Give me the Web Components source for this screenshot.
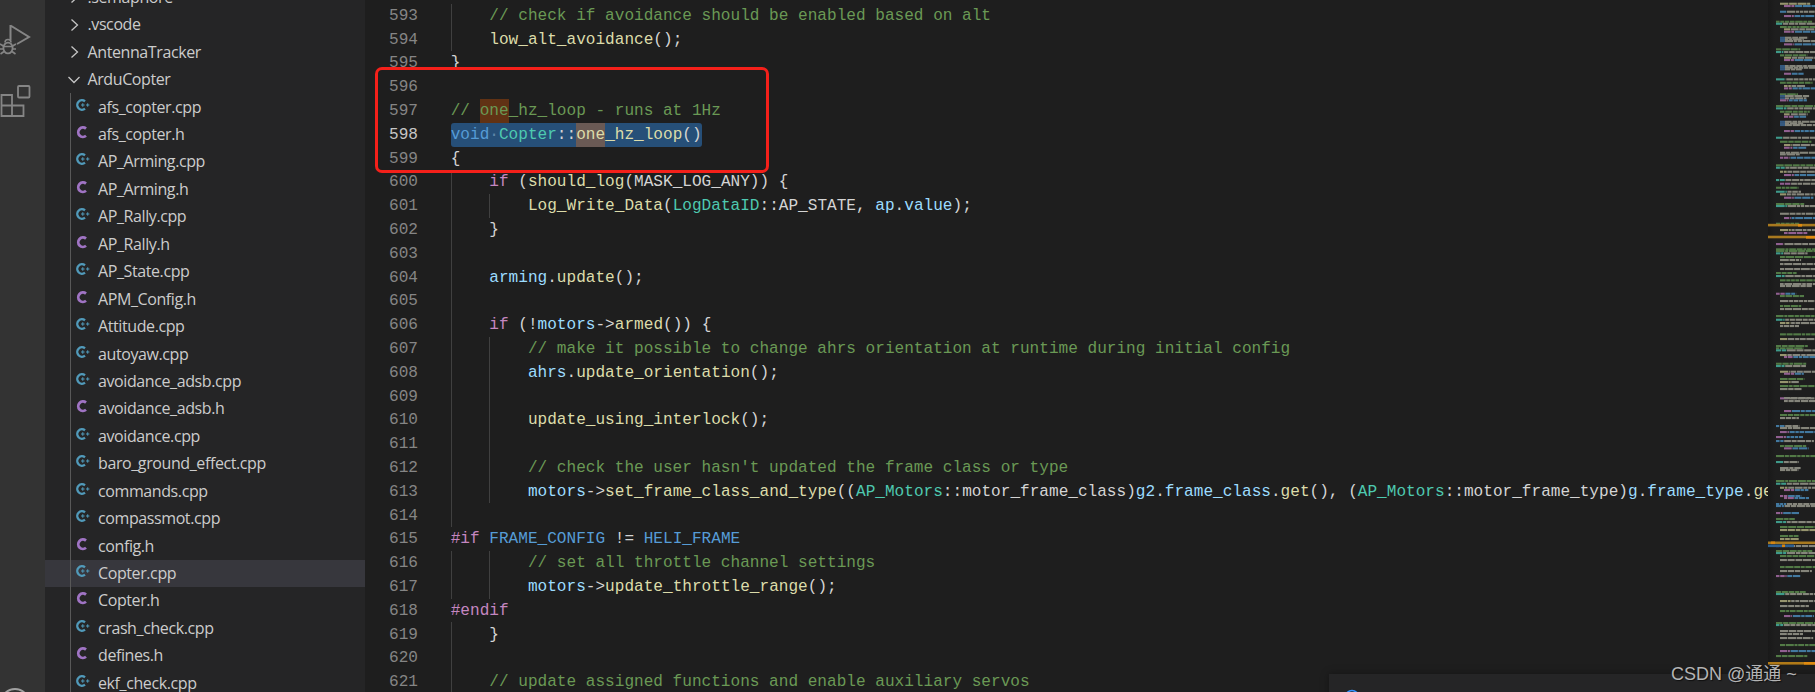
<!DOCTYPE html>
<html>
<head>
<meta charset="utf-8">
<title>ArduCopter</title>
<style>
  html, body { margin: 0; height: 692px; overflow: hidden; background: #1e1e1e; }
</style>
</head>
<body>
<vs-app>
  <vs-activity slot="activity"></vs-activity>
  <vs-explorer slot="side">
    <vs-tree-row kind="closed">.semaphore</vs-tree-row>
    <vs-tree-row kind="closed">.vscode</vs-tree-row>
    <vs-tree-row kind="closed">AntennaTracker</vs-tree-row>
    <vs-tree-row kind="open">ArduCopter</vs-tree-row>
    <vs-tree-row kind="cpp">afs_copter.cpp</vs-tree-row>
    <vs-tree-row kind="h">afs_copter.h</vs-tree-row>
    <vs-tree-row kind="cpp">AP_Arming.cpp</vs-tree-row>
    <vs-tree-row kind="h">AP_Arming.h</vs-tree-row>
    <vs-tree-row kind="cpp">AP_Rally.cpp</vs-tree-row>
    <vs-tree-row kind="h">AP_Rally.h</vs-tree-row>
    <vs-tree-row kind="cpp">AP_State.cpp</vs-tree-row>
    <vs-tree-row kind="h">APM_Config.h</vs-tree-row>
    <vs-tree-row kind="cpp">Attitude.cpp</vs-tree-row>
    <vs-tree-row kind="cpp">autoyaw.cpp</vs-tree-row>
    <vs-tree-row kind="cpp">avoidance_adsb.cpp</vs-tree-row>
    <vs-tree-row kind="h">avoidance_adsb.h</vs-tree-row>
    <vs-tree-row kind="cpp">avoidance.cpp</vs-tree-row>
    <vs-tree-row kind="cpp">baro_ground_effect.cpp</vs-tree-row>
    <vs-tree-row kind="cpp">commands.cpp</vs-tree-row>
    <vs-tree-row kind="cpp">compassmot.cpp</vs-tree-row>
    <vs-tree-row kind="h">config.h</vs-tree-row>
    <vs-tree-row kind="cpp" selected>Copter.cpp</vs-tree-row>
    <vs-tree-row kind="h">Copter.h</vs-tree-row>
    <vs-tree-row kind="cpp">crash_check.cpp</vs-tree-row>
    <vs-tree-row kind="h">defines.h</vs-tree-row>
    <vs-tree-row kind="cpp">ekf_check.cpp</vs-tree-row>
  </vs-explorer>
  <vs-editor slot="editor"></vs-editor>
  <vs-minimap slot="minimap"></vs-minimap>
  <vs-toast slot="overlay"></vs-toast>
  <vs-callout slot="overlay"></vs-callout>
  <vs-watermark slot="overlay">CSDN @通通 ~</vs-watermark>
</vs-app>

<script>
class VsApp extends HTMLElement {
  constructor() {
    super();
    this.attachShadow({ mode: "open" });
    this.shadowRoot.innerHTML = `
      <style>
        :host { display: flex; position: relative; width: 1815px; height: 692px; overflow: hidden; }
      </style>
      <slot name="activity"></slot>
      <slot name="side"></slot>
      <slot name="editor"></slot>
      <slot name="minimap"></slot>
      <slot name="overlay"></slot>
    `;
  }
}

class VsActivity extends HTMLElement {
  constructor() {
    super();
    this.attachShadow({ mode: "open" });
    this.shadowRoot.innerHTML = `
      <style>
        :host { display: flex; flex-direction: column; justify-content: space-between; width: 45px; height: 692px; background: #333333; overflow: hidden; }
        svg { display: block; fill: none; stroke: #858585; }
        .top { padding-top: 22px; }
        .ext { margin-top: 29px; }
        .acct { margin-bottom: -28px; }
      </style>
      <div class="top">
        <svg width="45" height="34" viewBox="0 0 45 34">
          <path d="M10.5 3v15.5M10.5 3.5L29 15L17 22" stroke-width="2"/>
          <ellipse cx="8" cy="26" rx="4.6" ry="5.4" stroke-width="1.8"/>
          <path d="M3.5 24.5h9M0 22l3.5 2M16 22l-3.5 2M0 27h3.5M16 27h-3.5M0.5 32l3.5-2.5M15.5 32l-3.5-2.5" stroke-width="1.6"/>
          <path d="M5 20.5a3 3 0 0 1 6 0" stroke-width="1.6"/>
        </svg>
        <svg class="ext" width="45" height="32" viewBox="0 0 45 32">
          <rect x="18" y="1" width="11.5" height="11.5" rx="1" stroke-width="1.8"/>
          <path d="M1.5 10h10.5v10.5h11.5v10.5H1.5zM1.5 20.5h10.5V31" stroke-width="1.8"/>
        </svg>
      </div>
      <svg class="acct" width="45" height="32" viewBox="0 0 45 32">
        <circle cx="15" cy="15" r="14" stroke="#a0a0a0" stroke-width="2"/>
      </svg>
    `;
  }
}

class VsExplorer extends HTMLElement {
  constructor() {
    super();
    this.attachShadow({ mode: "open" });
    this.shadowRoot.innerHTML = `
      <style>
        :host { display: block; width: 320px; height: 692px; flex: none; overflow: hidden; background: #252526; }
        .list { margin-top: -16.4px; }
      </style>
      <div class="list"><slot></slot></div>
    `;
  }
}

const TREE_ICONS = {
  closed: `<svg width="16" height="16" viewBox="0 0 16 16"><path d="M5.5 2.5L11.5 8L5.5 13.5" fill="none" stroke="#c5c5c5" stroke-width="1.3"/></svg>`,
  open: `<svg width="16" height="16" viewBox="0 0 16 16"><path d="M2.5 5L8 10.5L13.5 5" fill="none" stroke="#c5c5c5" stroke-width="1.3"/></svg>`,
  cpp: `<svg width="16" height="16" viewBox="0 0 16 16"><path d="M9 3.4A4.7 4.7 0 1 0 9 10.6" fill="none" stroke="#519aba" stroke-width="2.4"/><path d="M5 7h3.6M6.8 5.2v3.6M10 7h3.4M11.7 5.3v3.4" fill="none" stroke="#519aba" stroke-width="1"/></svg>`,
  h: `<svg width="16" height="16" viewBox="0 0 16 16"><path d="M10 3.6A4.7 4.7 0 1 0 10 10.8" fill="none" stroke="#a074c4" stroke-width="2.8"/></svg>`
};

class VsTreeRow extends HTMLElement {
  constructor() {
    super();
    this.attachShadow({ mode: "open" });
    const kind = this.getAttribute("kind");
    this.shadowRoot.innerHTML = `
      <style>
        :host { display: flex; align-items: center; height: 27.45px; color: #cccccc; font: 16px/27px "Open Sans", "Noto Sans", sans-serif; letter-spacing: -0.4px; white-space: nowrap; }
        :host([kind="closed"]), :host([kind="open"]) { padding-left: 21px; gap: 5.5px; }
        :host([kind="cpp"]), :host([kind="h"]) { padding-left: 31px; gap: 6px; background: linear-gradient(#585858, #585858) 25px 0 / 1px 100% no-repeat; }
        :host([selected]) { background-color: #37373d; }
        svg { display: block; flex: none; }
        :host([kind="cpp"]) svg, :host([kind="h"]) svg { margin-bottom: 3px; }
      </style>
      ${TREE_ICONS[kind]}<span><slot></slot></span>
    `;
  }
}

// t = token classes: k keyword, m macro/pp, f function, v variable, c class, o comment, p plain
const CODE = [
  [593, 1, [["p", "    "], ["o", "// check if avoidance should be enabled based on alt"]]],
  [594, 1, [["p", "    "], ["f", "low_alt_avoidance"], ["p", "();"]]],
  [595, 0, [["p", "}"]]],
  [596, 0, []],
  [597, 0, [["o", "// "], ["o hit", "one"], ["o", "_hz_loop - runs at 1Hz"]]],
  [598, 0, [["sel", [["k", "void"], ["ws", "·"], ["c", "Copter"], ["p", "::"], ["f hit", "one"], ["f", "_hz_loop"], ["p", "()"]]]]],
  [599, 0, [["p", "{"]]],
  [600, 1, [["p", "    "], ["m", "if"], ["p", " ("], ["f", "should_log"], ["p", "(MASK_LOG_ANY)) {"]]],
  [601, 2, [["p", "        "], ["f", "Log_Write_Data"], ["p", "("], ["c", "LogDataID"], ["p", "::AP_STATE, "], ["v", "ap"], ["p", "."], ["v", "value"], ["p", ");"]]],
  [602, 1, [["p", "    }"]]],
  [603, 1, []],
  [604, 1, [["p", "    "], ["v", "arming"], ["p", "."], ["f", "update"], ["p", "();"]]],
  [605, 1, []],
  [606, 1, [["p", "    "], ["m", "if"], ["p", " (!"], ["v", "motors"], ["p", "->"], ["f", "armed"], ["p", "()) {"]]],
  [607, 2, [["p", "        "], ["o", "// make it possible to change ahrs orientation at runtime during initial config"]]],
  [608, 2, [["p", "        "], ["v", "ahrs"], ["p", "."], ["f", "update_orientation"], ["p", "();"]]],
  [609, 2, []],
  [610, 2, [["p", "        "], ["f", "update_using_interlock"], ["p", "();"]]],
  [611, 2, []],
  [612, 2, [["p", "        "], ["o", "// check the user hasn't updated the frame class or type"]]],
  [613, 2, [["p", "        "], ["v", "motors"], ["p", "->"], ["f", "set_frame_class_and_type"], ["p", "(("], ["c", "AP_Motors"], ["p", "::motor_frame_class)"], ["v", "g2"], ["p", "."], ["v", "frame_class"], ["p", "."], ["f", "get"], ["p", "(), ("], ["c", "AP_Motors"], ["p", "::motor_frame_type)"], ["v", "g"], ["p", "."], ["v", "frame_type"], ["p", "."], ["f", "get"], ["p", "());"]]],
  [614, 1, []],
  [615, 0, [["m", "#if"], ["p", " "], ["k", "FRAME_CONFIG"], ["p", " != "], ["k", "HELI_FRAME"]]],
  [616, 2, [["p", "        "], ["o", "// set all throttle channel settings"]]],
  [617, 2, [["p", "        "], ["v", "motors"], ["p", "->"], ["f", "update_throttle_range"], ["p", "();"]]],
  [618, 0, [["m", "#endif"]]],
  [619, 1, [["p", "    }"]]],
  [620, 1, []],
  [621, 1, [["p", "    "], ["o", "// update assigned functions and enable auxiliary servos"]]]
];

function renderTokens(tokens) {
  return tokens.map(([cls, text]) =>
    Array.isArray(text)
      ? `<span class="${cls}">${renderTokens(text)}</span>`
      : `<span class="${cls}">${text}</span>`
  ).join("");
}

class VsEditor extends HTMLElement {
  constructor() {
    super();
    this.attachShadow({ mode: "open" });
    const rows = CODE.map(([n, guides, tokens]) => `
      <div class="row g${guides}${n === 597 || n === 598 ? " hl" : ""}">
        <span class="num${n === 598 ? " cur" : ""}">${n}</span><span class="text">${renderTokens(tokens)}</span>
      </div>`).join("");
    this.shadowRoot.innerHTML = `
      <style>
        :host { display: block; flex: 1; min-width: 0; height: 692px; overflow: hidden; background: #1e1e1e; padding-top: 3.7px; box-sizing: border-box; font: 16.08px/23.8px "Liberation Mono", monospace; color: #d4d4d4; }
        .row { display: flex; height: 23.8px; white-space: pre; }
        .g1 { background: linear-gradient(#404040, #404040) 85.5px 0 / 1px 100% no-repeat; }
        .g2 { background: linear-gradient(#404040, #404040) 85.5px 0 / 1px 100% no-repeat, linear-gradient(#404040, #404040) 124px 0 / 1px 100% no-repeat; }
        .num { flex: none; width: 53px; text-align: right; color: #858585; margin-right: 32.7px; padding-top: 1.2px; }
        .cur { color: #c6c6c6; }
        .text { flex: none; padding-top: 1.2px; }
        .hl .text { padding-top: 0; }
        .o { color: #6a9955; }
        .k { color: #569cd6; }
        .m { color: #c586c0; }
        .f { color: #dcdcaa; }
        .v { color: #9cdcfe; }
        .c { color: #4ec9b0; }
        .ws { color: #5f86a8; }
        .hit { background: #613214; display: inline-block; height: 24px; box-sizing: border-box; padding-top: 1.2px; }
        .f.hit { background: #6a5a55; }
        .sel { background: #264f78; display: inline-block; height: 24px; border-radius: 3px; overflow: hidden; }
      </style>
      ${rows}
    `;
  }
}

// minimap rows read off the reference: y (px), indent column, colour run
const MINIMAP = `
2.7 1 y;5 2 pb;10.7 1 bw;15 2 pb;20.7 0 g;22.7 0 tw;26 1 g;28.3 2 yw;30.7 2 pb;36.7 1 Bw;38.3 1 Bw;40 1 Bw;43.3 2 pb;48.3 0 g;51 0 tw;54.3 1 g;56.7 2 yw;59 2 pb;65 1 Bw;66.7 1 Bw;68.3 1 Bw;72.7 2 pb;78.3 0 tw;81.7 1 g;85 2 yw;87.3 2 pb;93.3 1 g;95 1 Bw;97.3 1 Bw;99.3 1 pb;105 0 g;107.3 0 tw;110.7 1 g;113.3 2 yw;115.7 2 pb;120.7 1 Bw;122.3 1 Bw;124 1 Bw;130 2 pb;136.7 0 tw;140.7 1 g;144 2 yw;146.7 2 pb;151.7 1 w;153.3 1 w;156.7 1 pb;164.3 0 g;166.7 0 tw;170.7 1 yw;174 2 pb;179 0 tw;182.7 1 pw;186.7 0 g;190.7 0 tw;193.3 1 yw;196.7 2 pb;203 0 g;205 0 tw;212.7 1 w;217 2 pb;222.7 0 g;229 1 yw;232 2 p;243 0 pw;248.3 0 g;250 0 g;252.3 0 tw;256 1 g;259 1 w;263 1 w;268 1 w;272 0 g;275 0 tw;279.3 1 g;283 1 w;285 1 w;292.7 0 pb;295 1 g;300 1 w;305 1 g;308 1 w;315 0 g;318.7 0 tw;322 1 yw;325 1 w;333.3 1 g;338 1 yw;345 0 g;347.3 0 g;349.3 0 tw;354 1 yw;356 2 pb;362.7 0 g;365 0 tw;370.7 1 yw;372.7 2 pb;378 1 g;381 1 yw;385 1 g;388 1 w;397.3 1 pw;400 2 w;397 2 w;410 2 pb;414 1 g;417 1 w;425 0 bw;427 1 w;431 1 pb;436 0 pb;440 0 bw;445 1 g;447.3 2 pb;455 0 g;461 0 tw;467 1 w;469 1 w;480 0 g;482.7 0 tw;486.7 1 yw;489 2 pb;495 1 pb;497 2 pb;503 0 bw;505 0 bw;512 0 pb;518 0 g;521 0 tw;526 1 g;529 1 y;535 1 g;538 1 y;545 0 pw;550 0 g;552 0 tw;555 1 g;559 1 w;566 1 g;570 1 w;575 0 pb;591 0 g;593 0 tw;600 1 yw;605 1 w;610 1 g;615 2 pb;622 0 g;624 0 tw;630 1 w;633 1 w;637 1 w;644 1 g;650 1 pb;655 0 g;
`;
const MINI_BANDS = [
  [223.8, 0, 47, "#a8791f"], [224, 30, 4, "#e08a10"],
  [235.7, 0, 47, "#a8791f"], [236, 38, 9, "#e08a10"],
  [541.5, 0, 47, "#a8791f"], [541.5, 3, 4, "#d68512"],
  [544.5, 0, 26, "#2f5f8f"], [544.5, 14, 3, "#d68512"],
  [662, 0, 47, "#b07a18"], [662, 36, 11, "#e08a10"]
];
const MINI_COLORS = { g: "#527a46", t: "#3f9a8a", y: "#96946e", p: "#905f90", b: "#42789f", w: "#85857b", B: "#35597f" };

class VsMinimap extends HTMLElement {
  constructor() {
    super();
    this.attachShadow({ mode: "open" });
    let seed = 7;
    const rnd = () => (seed = (seed * 1103 + 12345) % 65536) / 65536;
    let rects = "";
    for (const entry of MINIMAP.trim().split(";")) {
      if (!entry.trim()) continue;
      const [y, col, run] = entry.trim().split(" ");
      let x = 8 + col * 4;
      const end = Math.min(47, x + 18 + rnd() * 40);
      [...run].forEach((key, i) => {
        const block = key === "B";
        const stop = i === run.length - 1 ? end : x + (block ? 5 : 6 + rnd() * 5);
        while (x < stop) {
          const w = Math.min(stop - x, block ? 5 : 3 + rnd() * 6);
          rects += `<rect x="${x.toFixed(1)}" y="${y}" width="${w.toFixed(1)}" height="2.1" fill="${MINI_COLORS[key]}"/>`;
          x += w + (block ? 0 : 0.7);
        }
      });
    }
    for (const [y, x, w, fill] of MINI_BANDS) {
      rects += `<rect x="${x}" y="${y}" width="${w}" height="2.6" fill="${fill}"/>`;
    }
    this.shadowRoot.innerHTML = `
      <style>
        :host { display: block; flex: none; width: 47px; height: 692px; overflow: hidden; background: linear-gradient(90deg, #191919, #1e1e1e 7px); }
        svg { display: block; filter: blur(0.35px); }
      </style>
      <svg width="47" height="692" viewBox="0 0 47 692">${rects}</svg>
    `;
  }
}

class VsToast extends HTMLElement {
  constructor() {
    super();
    this.attachShadow({ mode: "open" });
    this.shadowRoot.innerHTML = `
      <style>
        :host { display: block; position: absolute; left: 1329px; top: 674px; width: 486px; height: 40px; background: #252526; box-shadow: 0 0 8px rgba(0, 0, 0, 0.36); }
        svg { display: block; margin: 15px 0 0 15px; }
      </style>
      <svg width="16" height="16" viewBox="0 0 16 16"><circle cx="8" cy="8" r="6.5" fill="none" stroke="#3794ff" stroke-width="1.6"/></svg>
    `;
  }
}

class VsCallout extends HTMLElement {
  constructor() {
    super();
    this.attachShadow({ mode: "open" });
    this.shadowRoot.innerHTML = `
      <style>
        :host { display: block; position: absolute; left: 375px; top: 67px; width: 394px; height: 106px; box-sizing: border-box; border: 3.5px solid #f4201a; border-radius: 7px; pointer-events: none; }
      </style>
    `;
  }
}

class VsWatermark extends HTMLElement {
  constructor() {
    super();
    this.attachShadow({ mode: "open" });
    this.shadowRoot.innerHTML = `
      <style>
        :host { display: block; position: absolute; left: 1671px; top: 663px; color: #b4b4b4; font: 18px/22px "Liberation Sans", "Noto Sans CJK SC", sans-serif; white-space: nowrap; text-shadow: 1px 1px 1px rgba(0, 0, 0, 0.6); }
      </style>
      <slot></slot>
    `;
  }
}

customElements.define("vs-app", VsApp);
customElements.define("vs-activity", VsActivity);
customElements.define("vs-explorer", VsExplorer);
customElements.define("vs-tree-row", VsTreeRow);
customElements.define("vs-editor", VsEditor);
customElements.define("vs-minimap", VsMinimap);
customElements.define("vs-toast", VsToast);
customElements.define("vs-callout", VsCallout);
customElements.define("vs-watermark", VsWatermark);
</script>
</body>
</html>
